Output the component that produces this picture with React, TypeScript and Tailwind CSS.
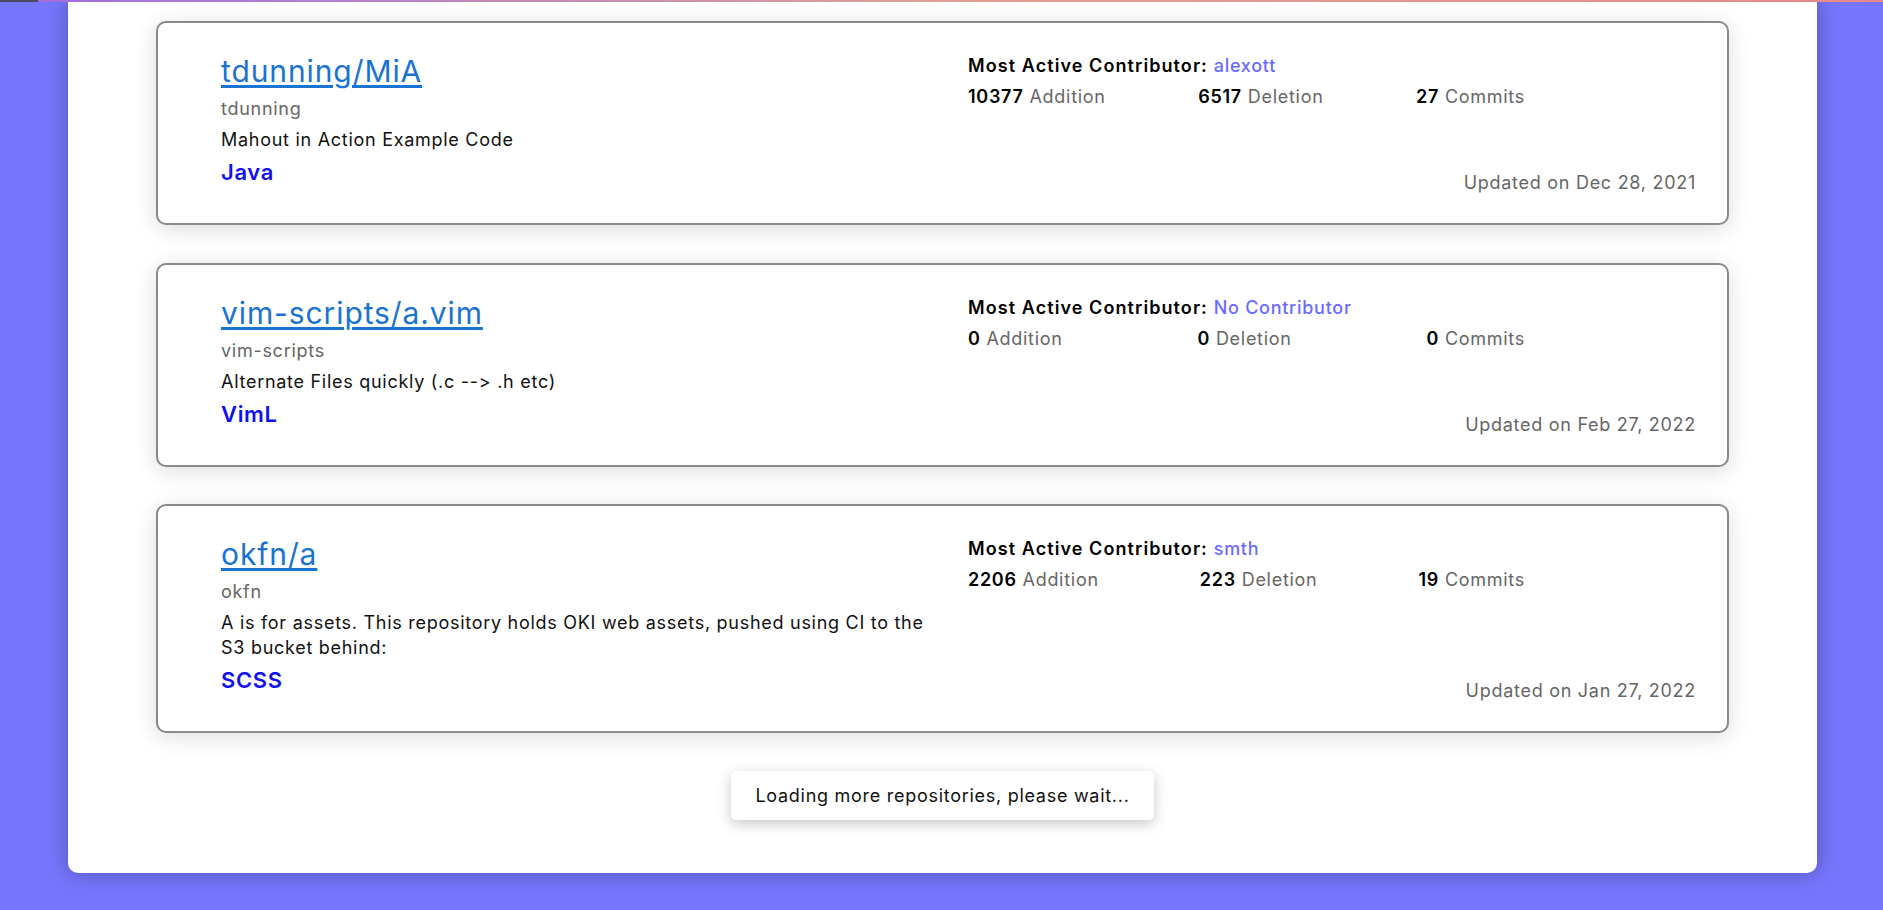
import React from 'react';

type Repo = {
  name: string;
  owner: string;
  description: string;
  language: string;
  contributor: string;
  additions: number;
  deletions: number;
  commits: number;
  updated: string;
};

const repos: Repo[] = [
  {
    name: 'tdunning/MiA',
    owner: 'tdunning',
    description: 'Mahout in Action Example Code',
    language: 'Java',
    contributor: 'alexott',
    additions: 10377,
    deletions: 6517,
    commits: 27,
    updated: 'Dec 28, 2021',
  },
  {
    name: 'vim-scripts/a.vim',
    owner: 'vim-scripts',
    description: 'Alternate Files quickly (.c --> .h etc)',
    language: 'VimL',
    contributor: 'No Contributor',
    additions: 0,
    deletions: 0,
    commits: 0,
    updated: 'Feb 27, 2022',
  },
  {
    name: 'okfn/a',
    owner: 'okfn',
    description:
      'A is for assets. This repository holds OKI web assets, pushed using CI to the S3 bucket behind:',
    language: 'SCSS',
    contributor: 'smth',
    additions: 2206,
    deletions: 223,
    commits: 19,
    updated: 'Jan 27, 2022',
  },
];

function Stat({ value, label }: { value: number; label: string }) {
  return (
    <div className="text-[18px] leading-[24px] tracking-[0.04em]">
      <span className="font-semibold text-black">{value}</span>{' '}
      <span className="text-[#666]">{label}</span>
    </div>
  );
}

function RepoCard({ repo }: { repo: Repo }) {
  return (
    <div className="flex rounded-[10px] border-2 border-[#8a8a8a] bg-white pt-[31px] pb-[28px] pl-[63px] pr-[31px] shadow-[0_4px_22px_rgba(0,0,0,0.14)]">
      {/* left: name, owner, description, language */}
      <div className="w-[747px] shrink-0 pr-[30px]">
        <a href="#" className="block text-[30px] leading-[34px] tracking-[0.03em] text-[#1a73d0] underline underline-offset-[3px]">
          {repo.name}
        </a>
        <div className="mt-[9px] text-[18px] leading-[24px] tracking-[0.04em] text-[#666]">{repo.owner}</div>
        <div className="mt-[6px] text-[18px] leading-[25px] tracking-[0.04em] text-[#111]">{repo.description}</div>
        <div className="mt-[6px] mb-[9px] text-[22px] leading-[28px] font-semibold tracking-[0.03em] text-[#1010f0]">
          {repo.language}
        </div>
      </div>

      {/* right: contributor stats + date */}
      <div className="flex flex-1 flex-col justify-between">
        <div>
          <div className="text-[18px] leading-[24px] tracking-[0.04em]">
            <span className="font-semibold tracking-[0.06em] text-black">Most Active Contributor:</span>{' '}
            <span className="font-medium text-[#6b6bff]">{repo.contributor}</span>
          </div>
          <div className="mt-[7px] flex w-[557px] justify-between">
            <Stat value={repo.additions} label="Addition" />
            <Stat value={repo.deletions} label="Deletion" />
            <Stat value={repo.commits} label="Commits" />
          </div>
        </div>
        <div className="text-right text-[18px] leading-[24px] tracking-[0.04em] text-[#666]">
          Updated on {repo.updated}
        </div>
      </div>
    </div>
  );
}

export default function App() {
  return (
    <div
      className="relative h-[910px] overflow-hidden bg-[#7676fd] [font-feature-settings:'calt'_0,'liga'_0]"
      style={{ fontFamily: 'Inter, "Open Sans", sans-serif' }}
    >
      {/* top progress bar */}
      <div className="absolute left-0 right-0 top-0 z-10 flex h-[2px]">
        <div className="w-[38px] bg-[#4a4a5c]" />
        <div className="flex-1 bg-gradient-to-r from-[#a36ce0] via-[#e0a090] to-[#e58a8a]" />
      </div>

      <div className="ml-[68px] w-[1749px] rounded-b-[10px] bg-white px-[88px] pt-[21px] pb-[53px] shadow-[0_0_22px_rgba(0,0,0,0.3)]">
        <div className="flex flex-col gap-[37.5px]">
          {repos.map((r) => (
            <RepoCard key={r.name} repo={r} />
          ))}
        </div>

        <div className="mt-[38px] flex justify-center">
          <div className="flex h-[49px] w-[423px] items-center justify-center rounded-[5px] bg-white text-[18px] tracking-[0.04em] text-[#111] shadow-[0_4px_14px_rgba(0,0,0,0.22)]">
            Loading more repositories, please wait...
          </div>
        </div>
      </div>
    </div>
  );
}
